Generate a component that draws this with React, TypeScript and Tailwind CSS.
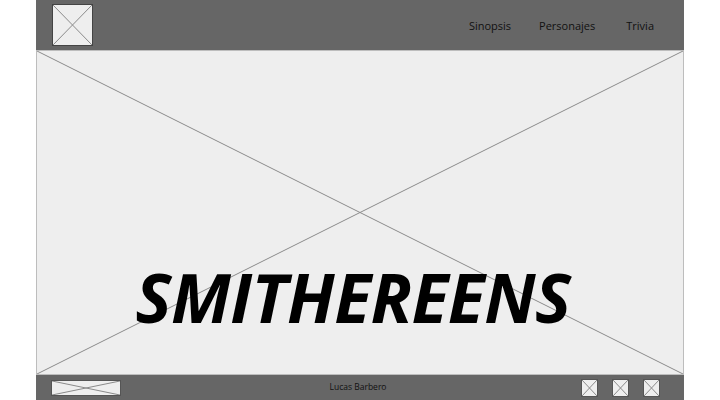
const font = { fontFamily: '"Open Sans", "Noto Sans", sans-serif' };

function Cross({ className = "" }: { className?: string }) {
  return (
    <div className={`bg-[#eeeeee] ${className}`}>
      <svg className="absolute inset-0 w-full h-full" viewBox="0 0 100 100" preserveAspectRatio="none">
        <line x1="0" y1="0" x2="100" y2="100" stroke="#8a8a8a" strokeWidth="1" vectorEffect="non-scaling-stroke" />
        <line x1="100" y1="0" x2="0" y2="100" stroke="#8a8a8a" strokeWidth="1" vectorEffect="non-scaling-stroke" />
      </svg>
    </div>
  );
}

export default function App() {
  return (
    <div className="w-[720px] h-[400px] bg-white flex justify-center" style={font}>
      <div className="w-[648px] h-full flex flex-col">
        <header className="h-[50px] bg-[#666666] flex items-center justify-between pl-[16px] pr-[30px]">
          <Cross className="relative w-[41px] h-[42px] border border-[#444]" />
          <nav className="flex gap-[28px] text-[11px] text-[#111] pt-[2px]">
            <span>Sinopsis</span>
            <span>Personajes</span>
            <span className="ml-[3px]">Trivia</span>
          </nav>
        </header>
        <main className="relative flex-1 bg-[#eeeeee] border border-[#bdbdbd]">
          <Cross className="absolute inset-0" />
          <div className="relative h-full flex items-end justify-center pb-[43px] pr-[14px]">
            <h1 className="text-[68px] leading-none font-bold italic text-black tracking-[-0.5px]">SMITHEREENS</h1>
          </div>
        </main>
        <footer className="h-[25px] bg-[#666666] flex items-center pl-[15px] pr-[24px]">
          <Cross className="relative w-[70px] h-[16px] border border-[#555]" />
          <span className="flex-1 text-center text-[8.5px] text-[#111] pl-[14px]">Lucas Barbero</span>
          <div className="flex gap-[14px]">
            <Cross className="relative w-[17px] h-[18px] border border-[#555]" />
            <Cross className="relative w-[17px] h-[18px] border border-[#555]" />
            <Cross className="relative w-[17px] h-[18px] border border-[#555]" />
          </div>
        </footer>
      </div>
    </div>
  );
}
